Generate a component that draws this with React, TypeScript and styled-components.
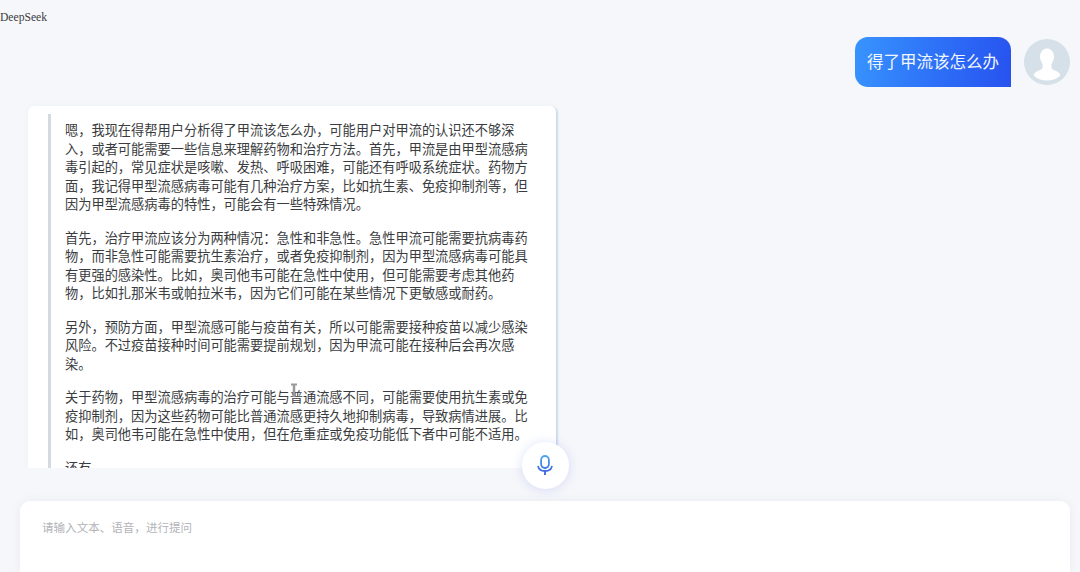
import React from 'react'
import styled, { createGlobalStyle } from 'styled-components'

const GlobalStyle = createGlobalStyle`
  * {
    box-sizing: border-box;
  }

  body {
    margin: 0;
    background: #f6f7fa;
    overflow: hidden;
    font-family: 'Noto Sans CJK SC', sans-serif;
  }
`

const Page = styled.div`
  display: flex;
  flex-direction: column;
  height: 572px;
  background: #f6f7fa;
`

const Title = styled.div`
  height: 37px;
  padding-top: 11px;
  color: #3a3c40;
  font-family: 'Liberation Serif', serif;
  font-size: 11.6px;
  line-height: 14px;
`

const QuestionRow = styled.div`
  display: flex;
  justify-content: flex-end;
  gap: 13px;
  height: 69px;
  padding-right: 10px;
`

const Bubble = styled.div`
  width: 156px;
  height: 50px;
  padding-left: 12px;
  border-radius: 13px 13px 0 13px;
  background: linear-gradient(100deg, #3894fe 0%, #2e73f8 48%, #2752ef 100%);
  color: #f1f7ff;
  font-size: 16.5px;
  line-height: 49px;
  white-space: nowrap;
`

const Avatar = styled.svg`
  width: 46px;
  height: 46px;
  margin-top: 2px;
`

const Messages = styled.div`
  position: relative;
  flex: none;
  height: 362px;
  padding-left: 28px;
  clip-path: inset(-8px 0 0 0);
`

const Answer = styled.div`
  width: 528px;
  height: 400px;
  padding: 8px 20px 0;
  border-radius: 6px 6px 0 0;
  background: #fff;
  box-shadow: 1.5px 1px 1.5px #cddcec, 0 0 5px rgba(120, 140, 180, 0.06);
`

const Thinking = styled.div`
  width: 486px;
  height: 392px;
  padding: 7px 0 0 14px;
  border-left: 3.5px solid #d3dae2;
  color: #3a3c40;
  font-size: 13.23px;
  line-height: 18.5px;
`

const Paragraph = styled.p`
  margin: 0 0 15px;
`

const TextCursor = styled.svg`
  position: absolute;
  left: 290px;
  top: 277px;
  width: 8px;
  height: 15px;
`

const InputArea = styled.div`
  position: relative;
  flex: 1;
  margin: 33px 10px 0 20px;
  padding: 17px 22px;
  border-radius: 10px 10px 0 0;
  background: #fff;
  box-shadow: 0 0 8px rgba(100, 115, 150, 0.09);
`

const Placeholder = styled.div`
  color: #b2b4b8;
  font-size: 11.55px;
  line-height: 18px;
`

const MicButton = styled.button`
  position: absolute;
  left: 502px;
  top: -59px;
  display: flex;
  align-items: center;
  justify-content: center;
  width: 46.5px;
  height: 46.5px;
  padding: 0;
  border: 0;
  border-radius: 50%;
  background: #fff;
  box-shadow: 0 1px 12px rgba(80, 110, 230, 0.2);
`

const paragraphs = [
  '嗯，我现在得帮用户分析得了甲流该怎么办，可能用户对甲流的认识还不够深入，或者可能需要一些信息来理解药物和治疗方法。首先，甲流是由甲型流感病毒引起的，常见症状是咳嗽、发热、呼吸困难，可能还有呼吸系统症状。药物方面，我记得甲型流感病毒可能有几种治疗方案，比如抗生素、免疫抑制剂等，但因为甲型流感病毒的特性，可能会有一些特殊情况。',
  '首先，治疗甲流应该分为两种情况：急性和非急性。急性甲流可能需要抗病毒药物，而非急性可能需要抗生素治疗，或者免疫抑制剂，因为甲型流感病毒可能具有更强的感染性。比如，奥司他韦可能在急性中使用，但可能需要考虑其他药物，比如扎那米韦或帕拉米韦，因为它们可能在某些情况下更敏感或耐药。',
  '另外，预防方面，甲型流感可能与疫苗有关，所以可能需要接种疫苗以减少感染风险。不过疫苗接种时间可能需要提前规划，因为甲流可能在接种后会再次感染。',
  '关于药物，甲型流感病毒的治疗可能与普通流感不同，可能需要使用抗生素或免疫抑制剂，因为这些药物可能比普通流感更持久地抑制病毒，导致病情进展。比如，奥司他韦可能在急性中使用，但在危重症或免疫功能低下者中可能不适用。',
  '还有',
]

const MicIcon = () => (
  <svg width="16" height="20" viewBox="0 0 16 20" fill="none" stroke="url(#mic)" strokeWidth="1.8">
    <defs>
      <linearGradient id="mic" gradientUnits="userSpaceOnUse" x1="8" y1="0" x2="8" y2="20">
        <stop offset="0" stopColor="#4fa8f0" />
        <stop offset="1" stopColor="#3c5ddc" />
      </linearGradient>
    </defs>
    <rect x="4.1" y="1" width="7.8" height="12" rx="3.9" />
    <path d="M1 10.8C1.6 14.3 4.5 16 8 16S14.4 14.3 15 10.8" />
    <path d="M8.01 16V19L8 19V16" />
  </svg>
)

const App = () => {
  return (
    <Page>
      <GlobalStyle />
      <Title>DeepSeek</Title>
      <QuestionRow>
        <Bubble>得了甲流该怎么办</Bubble>
        <Avatar viewBox="0 0 46 46">
          <circle cx="23" cy="23" r="23" fill="#d5e0e9" />
          <ellipse cx="23" cy="18" rx="7" ry="8.8" fill="#fff" />
          <path
            d="M18.6 23V27.500C18.600 29.800 17.500 30.500 15 31.500 11.800 32.800 10 34 9.700 36.500 13 39.800 17.500 41.500 23 41.500S33 39.800 36.300 36.500C36 34 34.200 32.800 31 31.500 28.500 30.500 27.400 29.800 27.400 27.500V23z"
            fill="#fff"
          />
        </Avatar>
      </QuestionRow>
      <Messages>
        <Answer>
          <Thinking>
            {paragraphs.map((text) => (
              <Paragraph key={text}>{text}</Paragraph>
            ))}
          </Thinking>
        </Answer>
        <TextCursor viewBox="0 0 8 15" fill="none" stroke="#999">
          <path d="M1 1.5H7" strokeWidth="2" />
          <path d="M4 1V14" strokeWidth="2.5" />
        </TextCursor>
      </Messages>
      <InputArea>
        <Placeholder>请输入文本、语音，进行提问</Placeholder>
        <MicButton aria-label="语音">
          <MicIcon />
        </MicButton>
      </InputArea>
    </Page>
  )
}

export default App
